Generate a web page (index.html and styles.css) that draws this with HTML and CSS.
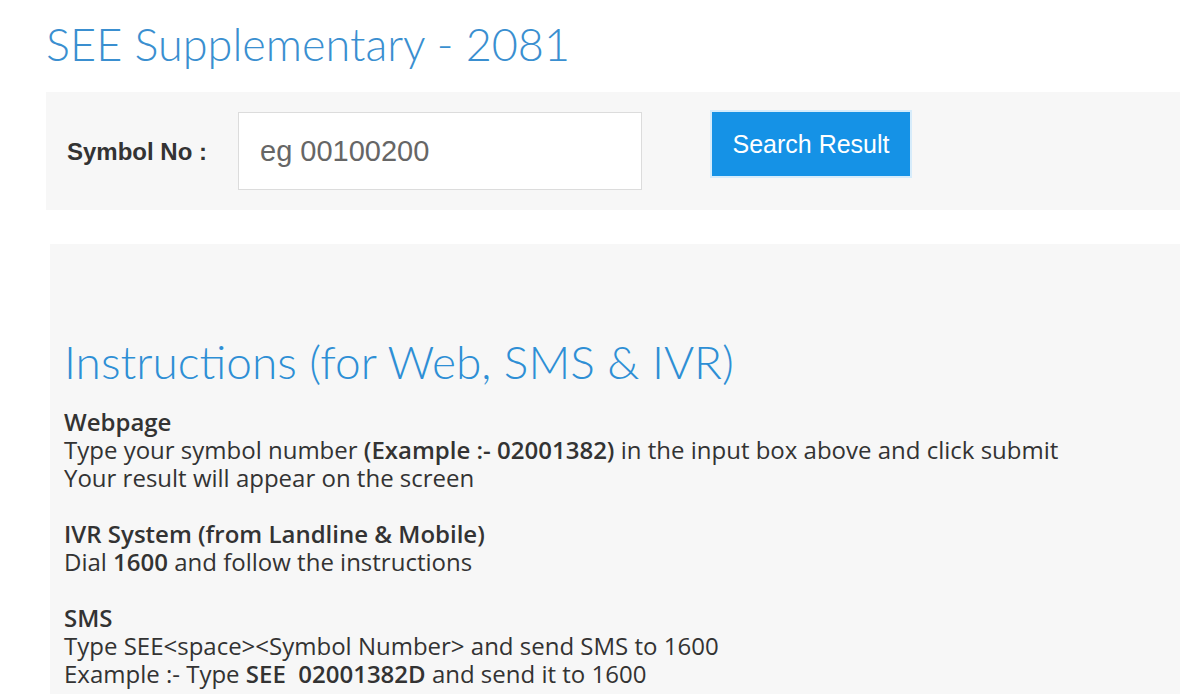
FILE: index.html
```html
<!DOCTYPE html>
<html>
<head>
<meta charset="utf-8">
<link rel="stylesheet" href="styles.css">
</head>
<body>
<div class="page">
  <h1 class="title">SEE Supplementary - 2081</h1>
  <form class="search">
    <label class="label" for="sym">Symbol No :</label>
    <input class="input" id="sym" type="text" placeholder="eg 00100200">
    <button class="btn" type="button">Search Result</button>
  </form>
  <section class="instructions">
    <h2 class="heading">Instructions (for Web, SMS &amp; IVR)</h2>
    <div class="block">
      <b>Webpage</b><br>
      Type your symbol number <b>(Example :- 02001382)</b> in the input box above and click submit<br>
      Your result will appear on the screen
    </div>
    <div class="block">
      <b>IVR System (from Landline &amp; Mobile)</b><br>
      Dial <b>1600</b> and follow the instructions
    </div>
    <div class="block">
      <b>SMS</b><br>
      Type SEE&lt;space&gt;&lt;Symbol Number&gt; and send SMS to 1600<br>
      Example :- Type <b>SEE&nbsp; 02001382D</b> and send it to 1600
    </div>
  </section>
</div>
</body>
</html>
```

FILE: styles.css
```css
html, body {
  margin: 0;
  padding: 0;
  background: #ffffff;
}
.page {
  padding: 0 0 0 46px;
  overflow: hidden;
}
.title {
  margin: 0;
  padding-top: 16px;
  height: 92px;
  box-sizing: border-box;
  font-family: "Lato", sans-serif;
  font-weight: 300;
  font-size: 45px;
  line-height: 56px;
  color: #3a8fd0;
}
.search {
  display: flex;
  align-items: center;
  background: #f7f7f7;
  height: 118px;
  margin: 0;
  padding: 0 0 0 21px;
}
.label {
  font-family: "Liberation Sans", Arial, sans-serif;
  font-weight: bold;
  font-size: 24px;
  color: #333;
  width: 171px;
  margin-top: 2px;
}
.input {
  width: 404px;
  height: 78px;
  box-sizing: border-box;
  border: 1px solid #dcdcdc;
  background: #fff;
  padding: 0 0 0 21px;
  font-family: "Liberation Sans", Arial, sans-serif;
  font-size: 29px;
  color: #555;
  outline: none;
}
.input::placeholder {
  color: #666;
}
.btn {
  margin-left: 68px;
  margin-top: -14px;
  width: 202px;
  height: 68px;
  box-sizing: border-box;
  border: 2px solid #d6ecfb;
  background: #1592e6;
  color: #fff;
  font-family: "Liberation Sans", Arial, sans-serif;
  font-size: 25px;
  padding: 0;
}
.instructions {
  margin: 34px 0 0 4px;
  background: #f7f7f7;
  padding: 90px 0 40px 14px;
  min-height: 400px;
  font-family: "Open Sans", sans-serif;
  font-size: 24px;
  line-height: 28px;
  color: #333;
}
.heading {
  margin: 0 0 18px 0;
  font-family: "Lato", sans-serif;
  font-weight: 300;
  font-size: 46px;
  line-height: 56px;
  color: #2e8fd5;
}
.block {
  margin-bottom: 28px;
}
.block b {
  font-weight: 600;
}
```
